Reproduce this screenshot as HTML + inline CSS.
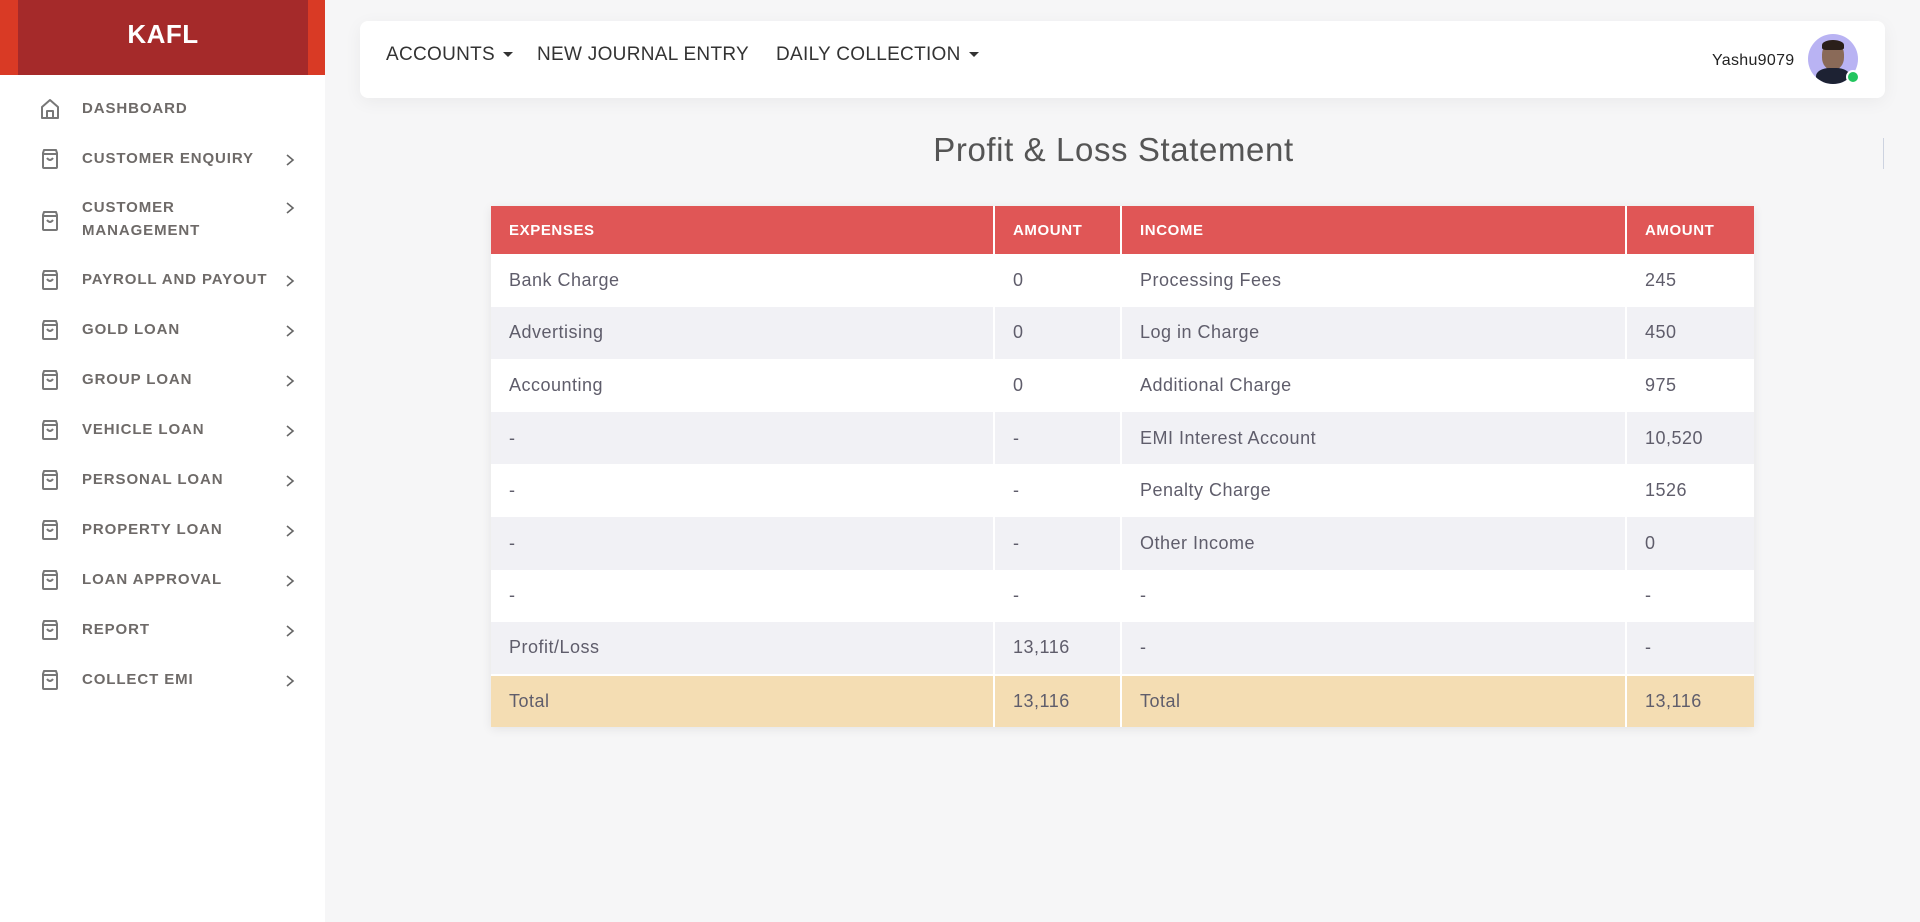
<!DOCTYPE html>
<html><head><meta charset="utf-8"><style>
*{box-sizing:border-box;margin:0;padding:0}
body{width:1920px;height:922px;background:#f6f6f7;font-family:"Liberation Sans",sans-serif;position:relative;overflow:hidden}
.side{position:absolute;left:0;top:0;width:325px;height:922px;background:#fff}
.brand{height:75px;background:#d93a25;position:relative}
.brand .in{position:absolute;left:18px;right:17px;top:0;bottom:0;background:#a52a2a;color:#fff;font-weight:bold;font-size:26px;text-align:center;line-height:68px;letter-spacing:0.5px}
.item{position:absolute;left:0;width:325px;color:#6e6a68;font-weight:bold;font-size:15px;letter-spacing:0.9px}
.item svg.ic{position:absolute;left:39px}
.item .t{position:absolute;left:82px;line-height:23px}
.item .ch{position:absolute;left:284px}
.nav{position:absolute;left:360px;top:21px;width:1525px;height:77px;background:#fff;border-radius:8px;box-shadow:0 4px 18px rgba(0,0,0,0.05)}
.nav .m{position:absolute;top:23px;font-size:19px;color:#333;letter-spacing:0.3px}
.caret{display:inline-block;width:0;height:0;border-left:5px solid transparent;border-right:5px solid transparent;border-top:5px solid #333;vertical-align:middle;margin-left:8px}
h1{position:absolute;left:0;width:100%;padding-left:307px;top:131px;text-align:center;font-weight:normal;font-size:33px;color:#555;letter-spacing:0.6px}
table{position:absolute;left:491px;top:206px;width:1263px;border-collapse:collapse;box-shadow:0 2px 10px rgba(0,0,0,0.08);font-size:18px;letter-spacing:0.5px;color:#5f5d6b}
th{background:#e05656;color:#fff;font-size:15px;letter-spacing:0.6px;text-align:left;height:48px;padding-left:18px;border-right:2px solid #fff}
td{height:52.6px;padding-left:18px;border-right:2px solid #fff}
th:last-child,td:last-child{border-right:none}
tr:nth-child(odd) td{background:#f1f1f5}
tr:nth-child(even) td{background:#fff}
tr.tot td{background:#f4ddb3;border-top:2px solid #fff}
</style></head><body>
<div class="side">
<div class="brand"><div class="in">KAFL</div></div>
<div class="item" style="top:97px"><svg class="ic" width="22" height="24" viewBox="0 0 22 24"><path d="M3 10 L11 3 L19 10 V21 H3 Z M8 21 V14 H14 V21" fill="none" stroke="#777" stroke-width="2" stroke-linejoin="round"/></svg><span class="t">DASHBOARD</span></div>
<script>
const items=[["CUSTOMER ENQUIRY",147],["CUSTOMER<br>MANAGEMENT",196],["PAYROLL AND PAYOUT",268],["GOLD LOAN",318],["GROUP LOAN",368],["VEHICLE LOAN",418],["PERSONAL LOAN",468],["PROPERTY LOAN",518],["LOAN APPROVAL",568],["REPORT",618],["COLLECT EMI",668]];
items.forEach(([t,y])=>{const two=t.includes('<br>');const iconTop=two?13:0;
document.write(`<div class="item" style="top:${y}px"><svg class="ic" style="top:${iconTop}px" width="22" height="24" viewBox="0 0 22 24"><path d="M5 3 H17 L18 6 V20 Q18 21 17 21 H5 Q4 21 4 20 V6 Z M4 7 H18 M8 11 Q11 15 14 11" fill="none" stroke="#777" stroke-width="2" stroke-linejoin="round"/></svg><span class="t">${t}</span><svg class="ch" style="top:${two?5:6}px" width="12" height="14" viewBox="0 0 12 14"><path d="M3 2 L9 7 L3 12" fill="none" stroke="#666" stroke-width="1.6"/></svg></div>`)});
</script>
</div>
<div class="nav">
<span class="m" style="left:26px">ACCOUNTS<span class="caret"></span></span>
<span class="m" style="left:177px">NEW JOURNAL ENTRY</span>
<span class="m" style="left:416px">DAILY COLLECTION<span class="caret"></span></span>
<span style="position:absolute;left:1352px;top:31px;font-size:16px;color:#222;letter-spacing:0.3px">Yashu9079</span>
<div style="position:absolute;left:1448px;top:13px;width:50px;height:50px;border-radius:50%;background:#b9b3f3;overflow:hidden"><div style="position:absolute;left:14px;top:8px;width:22px;height:28px;border-radius:45%;background:#8a6a58"></div><div style="position:absolute;left:14px;top:6px;width:22px;height:10px;border-radius:50% 50% 20% 20%;background:#2a1f1a"></div><div style="position:absolute;left:8px;top:34px;width:34px;height:20px;border-radius:40% 40% 0 0;background:#1d2233"></div></div>
<div style="position:absolute;left:1486px;top:49px;width:14px;height:14px;border-radius:50%;background:#22c55e;border:2px solid #fff"></div>
</div>
<div style="position:absolute;left:1883px;top:138px;width:1px;height:31px;background:#cdd3e0"></div>
<h1>Profit &amp; Loss Statement</h1>
<table>
<colgroup><col style="width:503px"><col style="width:127px"><col style="width:505px"><col style="width:128px"></colgroup>
<tr><th>EXPENSES</th><th>AMOUNT</th><th>INCOME</th><th>AMOUNT</th></tr>
<tr><td>Bank Charge</td><td>0</td><td>Processing Fees</td><td>245</td></tr>
<tr><td>Advertising</td><td>0</td><td>Log in Charge</td><td>450</td></tr>
<tr><td>Accounting</td><td>0</td><td>Additional Charge</td><td>975</td></tr>
<tr><td>-</td><td>-</td><td>EMI Interest Account</td><td>10,520</td></tr>
<tr><td>-</td><td>-</td><td>Penalty Charge</td><td>1526</td></tr>
<tr><td>-</td><td>-</td><td>Other Income</td><td>0</td></tr>
<tr><td>-</td><td>-</td><td>-</td><td>-</td></tr>
<tr><td>Profit/Loss</td><td>13,116</td><td>-</td><td>-</td></tr>
<tr class="tot"><td>Total</td><td>13,116</td><td>Total</td><td>13,116</td></tr>
</table>
</body></html>
